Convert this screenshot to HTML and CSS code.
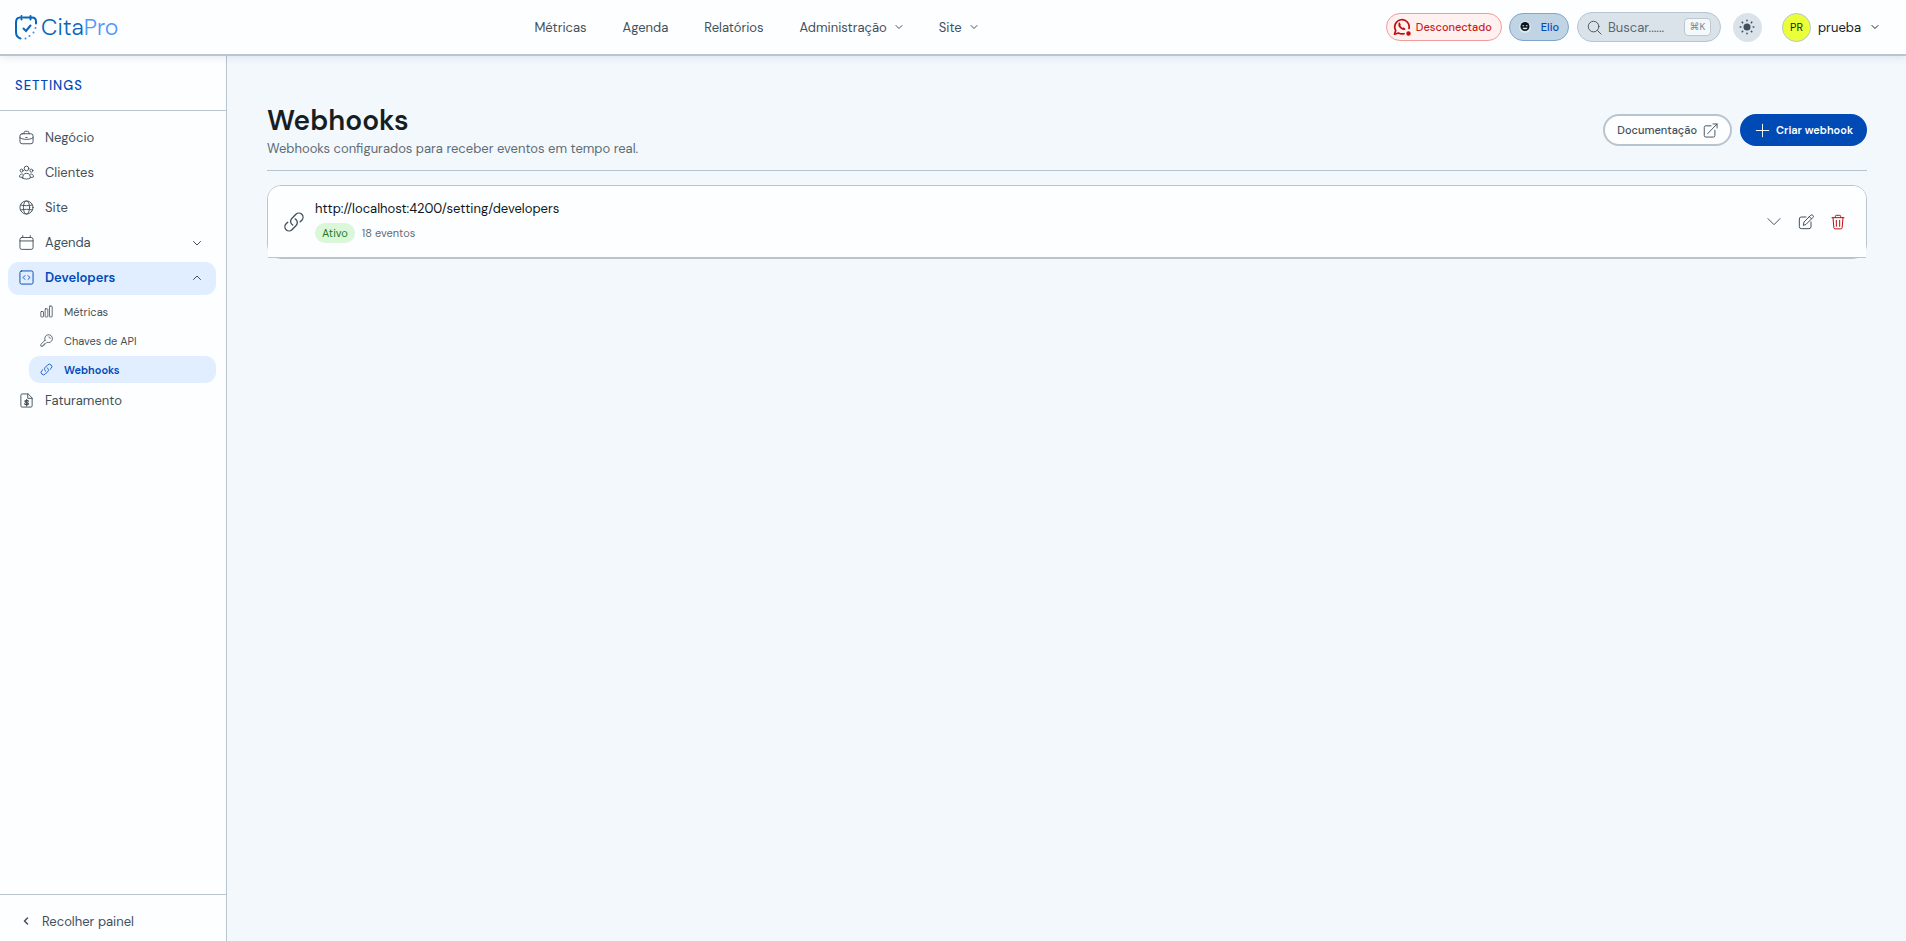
FILE: index.html
```html
<!DOCTYPE html>
<html lang="pt">
<head>
  <meta charset="UTF-8" />
  <meta name="viewport" content="width=device-width, initial-scale=1">
  <title>CitaPro - Webhooks</title>
  <link rel="stylesheet" href="styles.css">
</head>
<body>
  <header class="topbar">
    <a class="logo" href="#" aria-label="CitaPro">
      <svg viewBox="0 0 22 25" width="22" height="25" fill="none" stroke="#0a66b8" stroke-width="2" stroke-linecap="round">
        <path d="M5.500 23.500C2.500 22.500 1 20 1 17V7.500C1 4.500 2.500 2.500 5 2.500"/>
        <path d="M8.500 2.500h5.500M17 2.500c2.500 0 4 1.500 4 4v2M6.500 1v3.500M15.500 1v3.500"/>
        <path d="M8.500 13.500l2.500 2.500 4.500-5.500"/>
        <path stroke="#3f8cf0" d="M20.500 13v.1M18.500 17.500v.1M14.500 21v.1M10.500 23.500v.1"/>
      </svg>
      <span class="logo-text">Cita<span>Pro</span></span>
    </a>
    <nav class="main-nav">
      <a href="#">Métricas</a>
      <a href="#">Agenda</a>
      <a href="#">Relatórios</a>
      <button type="button">Administração <svg class="chev" viewBox="0 0 8 8"><path d="M1 2.500l3 3 3-3"/></svg></button>
      <button type="button">Site <svg class="chev" viewBox="0 0 8 8"><path d="M1 2.500l3 3 3-3"/></svg></button>
    </nav>
    <div class="actions">
      <button type="button" class="pill pill-red">
        <svg viewBox="0 0 18 18" width="18" height="18" fill="none" stroke="#c40d0d" stroke-width="1.700" stroke-linecap="round" stroke-linejoin="round">
          <path d="M11 15.700a7.300 7.300 0 0 1-5.500-.7L1.500 16.200l1.200-3.800A7.200 7.200 0 1 1 16 10.500"/>
          <path d="M6.300 5.500c-.9 2.500 2.400 6 5.200 5.700M6.300 5.500l.6 1.300M11.500 11.200L10.300 10.300"/>
          <circle cx="15.500" cy="15.500" r="1.400" fill="#c40d0d"/>
        </svg>
        Desconectado
      </button>
      <button type="button" class="pill pill-blue">
        <svg viewBox="0 0 12 12" width="12" height="12">
          <circle cx="6" cy="6" r="6" fill="#dce8f0"/>
          <circle cx="6" cy="5.500" r="4.500" fill="#0c151c"/>
          <path fill="#dce8f0" d="M3.500 4.200h1.600v1H3.500zM6.900 4.200h1.600v1H6.900zM3.500 6.700h5C8 8.800 4 8.800 3.500 6.700z"/>
        </svg>
        Elio
      </button>
      <label class="search">
        <svg class="icon" viewBox="0 0 24 24"><circle cx="10.500" cy="10.500" r="8.500"/><path d="M17 17l5.500 5.500"/></svg>
        <input type="text" placeholder="Buscar......" aria-label="Buscar">
        <kbd>⌘K</kbd>
      </label>
      <button type="button" class="theme" aria-label="Tema">
        <svg viewBox="0 0 16 16" width="16" height="16"><circle cx="8" cy="8" r="3.500" fill="#40505c"/><path stroke="#40505c" stroke-width="1.600" stroke-linecap="round" d="M8 1.200v.6M8 14.200v.6M1.200 8h.6M14.200 8h.6M3.200 3.200l.4.4M12.400 12.400l.4.4M3.200 12.800l.4-.4M12.400 3.600l.4-.4"/></svg>
      </button>
      <button type="button" class="user">
        <span class="avatar">PR</span>
        prueba
        <svg class="chev" viewBox="0 0 8 8"><path d="M1 2.500l3 3 3-3"/></svg>
      </button>
    </div>
  </header>

  <div class="layout">
    <aside class="sidebar">
      <h2>SETTINGS</h2>
      <nav class="side-nav">
        <a class="item" href="#">
          <svg class="icon" viewBox="0 0 24 24"><rect x="1.500" y="6" width="21" height="16" rx="3.500"/><path d="M8 6V4.500A2.500 2.500 0 0 1 10.500 2h3A2.500 2.500 0 0 1 16 4.500V6M1.500 12.500c6 3.500 15 3.500 21 0M11 12h2"/></svg>
          Negócio
        </a>
        <a class="item" href="#">
          <svg class="icon" viewBox="0 0 24 24"><circle cx="12" cy="5.500" r="3.700"/><circle cx="4.200" cy="9" r="2.400"/><circle cx="19.800" cy="9" r="2.400"/><path d="M6 21c-.5-5 2-7.700 6-7.700s6.500 2.700 6 7.700c-3.500 2-8.500 2-12 0zM5.500 14.500C3 14 .8 15.500.8 19c1.500.8 3 1 4.500.8M18.500 14.500c2.500-.5 4.700 1 4.700 4.500-1.500.8-3 1-4.500.8"/></svg>
          Clientes
        </a>
        <a class="item" href="#">
          <svg class="icon" viewBox="0 0 24 24"><circle cx="12" cy="12" r="10.500"/><ellipse cx="12" cy="12" rx="5" ry="10.500"/><path d="M2.500 8c6 1.500 13 1.500 19 0M2.500 16c6-1.500 13-1.500 19 0"/></svg>
          Site
        </a>
        <button type="button" class="item">
          <svg class="icon" viewBox="0 0 24 24"><rect x="1.500" y="4" width="21" height="19" rx="3"/><path d="M1.500 9.500h21M6 1v3M18 1v3"/></svg>
          Agenda
          <svg class="chev arrow" viewBox="0 0 8 8"><path d="M0.500 2.500L4 6l3.500-3.500"/></svg>
        </button>
        <button type="button" class="item active" aria-expanded="true">
          <svg class="icon" viewBox="0 0 24 24"><rect x="1.500" y="1.500" width="21" height="21" rx="2.500"/><path d="M9.500 9L6.500 12l3 3M14.500 9l3 3-3 3"/></svg>
          Developers
          <svg class="chev arrow" viewBox="0 0 8 8"><path d="M0.500 5.500L4 2l3.500 3.500"/></svg>
        </button>
        <div class="submenu">
          <a class="subitem" href="#">
            <svg class="icon" viewBox="0 0 24 24"><rect x="1.500" y="12" width="5" height="10" rx="1"/><rect x="9.500" y="7" width="5" height="15" rx="1"/><rect x="17.500" y="2" width="5" height="20" rx="1"/></svg>
            Métricas
          </a>
          <a class="subitem" href="#">
            <svg class="icon" viewBox="0 0 24 24"><path d="M9.200 11.500L1.500 19.200v3.300h4.200v-2.200h2.200v-2.200h2.200l2.900-2.900A7.200 7.200 0 1 0 9.200 11.500z"/><path d="M16.500 5.500a2.500 2.500 0 0 1 2.500 2.500"/></svg>
            Chaves de API
          </a>
          <a class="subitem active" href="#">
            <svg class="icon" viewBox="0 0 24 24"><path d="M13.200 8.700a4.500 4.500 0 0 1 1.100 7.200l-4.500 4.500a4.500 4.500 0 0 1-6.400-6.400l1.800-1.700M18.700 11.700l1.800-1.700a4.500 4.500 0 0 0-6.400-6.400L9.600 8.100a4.500 4.500 0 0 0 1.100 7.200"/></svg>
            Webhooks
          </a>
        </div>
        <a class="item" href="#">
          <svg class="icon" viewBox="0 0 24 24"><path d="M14 1.500H5a2 2 0 0 0-2 2v17a2 2 0 0 0 2 2h14a2 2 0 0 0 2-2V8.500zM14 1.500v7h7"/><path stroke-width="2" d="M15 13c-1-1.500-5.500-1.500-5.500.7 0 2.300 5.500 1 5.500 3.300 0 2-5 2-6 .3M12.200 10.500v10"/></svg>
          Faturamento
        </a>
      </nav>
      <button type="button" class="collapse">
        <svg class="chev" viewBox="0 0 8 8"><path d="M5.500 1l-3 3 3 3"/></svg>
        Recolher painel
      </button>
    </aside>

    <main class="content">
      <div class="page-head">
        <div>
          <h1>Webhooks</h1>
          <p>Webhooks configurados para receber eventos em tempo real.</p>
        </div>
        <div class="page-actions">
          <a class="btn btn-outline" href="#">
            Documentação
            <svg class="icon" viewBox="0 0 24 24"><path d="M13 4.500H4.500a2.500 2.500 0 0 0-2.500 2.500v13A2.500 2.500 0 0 0 4.500 22.500h12a2.500 2.500 0 0 0 2.500-2.500v-8.500M7.500 17L22.500 1.500M16 1.500h6.500V8"/></svg>
          </a>
          <button type="button" class="btn btn-primary">
            <svg class="icon" viewBox="0 0 24 24"><path d="M12 2v20M2 12h20"/></svg>
            Criar webhook
          </button>
        </div>
      </div>

      <div class="card">
        <div class="webhook">
          <svg class="icon link-icon" viewBox="0 0 24 24"><path d="M13.200 8.700a4.500 4.500 0 0 1 1.100 7.200l-4.500 4.500a4.500 4.500 0 0 1-6.400-6.400l1.800-1.700M18.700 11.700l1.800-1.700a4.500 4.500 0 0 0-6.400-6.400L9.600 8.100a4.500 4.500 0 0 0 1.100 7.200"/></svg>
          <div class="info">
            <span class="url">http://localhost:4200/setting/developers</span>
            <div class="meta"><span class="badge">Ativo</span> <span>18 eventos</span></div>
          </div>
          <div class="tools">
            <button type="button" aria-label="Expandir"><svg class="icon" viewBox="0 0 24 24"><path d="M3 7l9 9 9-9"/></svg></button>
            <button type="button" aria-label="Editar"><svg class="icon" viewBox="0 0 24 24"><path d="M12 4.500H5A3 3 0 0 0 2 7.500V19a3 3 0 0 0 3 3h11.500a3 3 0 0 0 3-3v-7M8 16.500l1-4.500L19 2a2.300 2.300 0 0 1 3.300 3.300l-10 10zM17 4l3.200 3.200"/></svg></button>
            <button type="button" class="danger" aria-label="Excluir"><svg class="icon" viewBox="0 0 24 24"><path d="M3 5.500h18M8 5.500V3.500A1.500 1.500 0 0 1 9.500 2h5A1.500 1.500 0 0 1 16 3.500v2M4.500 5.500l1.300 15a2 2 0 0 0 2 1.800h8.400a2 2 0 0 0 2-1.800l1.300-15M9.500 9.500v9M14.500 9.500v9"/></svg></button>
          </div>
        </div>
      </div>
    </main>
  </div>
</body>
</html>
```
FILE: styles.css
```css
* { box-sizing:border-box; }
body { margin:0; min-height:100vh; display:flex; flex-direction:column; font-family:"DM Sans", Inter, sans-serif; font-size:13px; color:#435059; background:#f3f8fd; }
a { color:inherit; text-decoration:none; }
button { font:inherit; color:inherit; background:none; border:none; padding:0; cursor:pointer; }
svg { flex:none; }
.icon { width:15px; height:15px; fill:none; stroke:currentColor; stroke-width:1.5; stroke-linecap:round; stroke-linejoin:round; }
.chev { width:8px; height:8px; fill:none; stroke:currentColor; stroke-width:1; stroke-linecap:round; stroke-linejoin:round; }

/* top bar */
.topbar { position:relative; height:56px; padding:0 27px 0 15px; display:flex; align-items:center; justify-content:space-between; background:#fdfeff; border-bottom:2px solid #bac5ce; box-shadow:0 2px 8px rgba(30,60,90,0.1); }
.logo { display:flex; align-items:center; gap:4px; }
.logo-text { font-family:"DM Sans", Lato, sans-serif; font-size:23px; line-height:26px; font-weight:300; color:#0a66b8; }
.logo-text span { color:#5297fa; }
.main-nav { margin-left:8px; display:flex; align-items:center; gap:36px; }
.main-nav button { display:flex; align-items:center; gap:8px; }
.actions { display:flex; align-items:center; }
.pill { height:28px; display:flex; align-items:center; border:1px solid; border-radius:14px; font-size:11px; font-weight:500; }
.pill-red { padding:0 9px 0 6px; gap:5px; color:#c81e1e; background:#fff1f0; border-color:#f09a9a; }
.pill-blue { margin-left:7px; padding:0 9px; gap:10px; color:#0049b8; background:#c0d4e4; border-color:#7ea6cc; }
.search { width:144px; height:30px; margin-left:8px; padding:0 9px; display:flex; align-items:center; gap:6px; background:#dbe3ea; border:1px solid #b8c4ce; border-radius:15px; }
.search input { flex:1; min-width:0; padding:0; border:none; outline:none; background:none; font:inherit; color:#435059; }
.search input::placeholder { color:#5a6871; opacity:1; }
kbd { width:27px; height:18px; text-align:center; font-family:"DM Sans", "DejaVu Sans", sans-serif; font-size:10px; line-height:15px; color:#77848c; background:#f6f9fb; border:1px solid #bcc7cf; border-radius:4px; }
.theme { width:29px; height:29px; margin-left:12px; display:flex; align-items:center; justify-content:center; border-radius:50%; background:#dbe3ea; }
.user { margin-left:20px; display:flex; align-items:center; gap:7px; color:#171e23; }
.avatar { width:29px; height:29px; border:1px solid #b8c4ce; border-radius:50%; background:#eaff38; font-size:11px; line-height:27px; text-align:center; }
.user .chev { margin-left:3px; }

.layout { flex:1; display:flex; }

/* sidebar */
.sidebar { width:227px; display:flex; flex-direction:column; background:#fdfeff; border-right:1px solid #b8c4ce; }
.sidebar h2 { margin:0; padding:22px 15px 16px; font-size:13px; line-height:16px; font-weight:500; letter-spacing:1px; color:#0049b8; border-bottom:1px solid #b8c4ce; }
.side-nav { flex:1; padding:11px 10px 8px 8px; display:flex; flex-direction:column; gap:2px; }
.item { height:33px; padding:0 15px 2px 11px; display:flex; align-items:center; gap:11px; border-radius:11px; text-align:left; }
.arrow { margin-left:auto; }
.active { background:#e0eeff; color:#0049b8; font-weight:600; }
.active .arrow { color:#435059; }
.submenu { margin-left:21px; padding-top:1px; display:flex; flex-direction:column; gap:2px; }
.subitem { height:27px; padding:0 11px; display:flex; align-items:center; gap:11px; border-radius:11px; font-size:11px; }
.subitem .icon { width:13px; height:13px; }
.collapse { height:47px; padding:6px 22px 0; display:flex; align-items:center; gap:12px; border-top:1px solid #b8c4ce; }
.collapse .chev { stroke-width:1.5; }

/* page */
.content { flex:1; padding:46px 39px 40px 40px; }
.page-head { padding-bottom:12px; display:flex; align-items:center; justify-content:space-between; border-bottom:1px solid #b8c4ce; }
.page-head h1 { margin:0; font-size:28px; line-height:38px; font-weight:600; color:#171e23; }
.page-head p { margin:0; line-height:18px; color:#5f6c75; }
.page-actions { display:flex; align-items:center; gap:8px; }
.btn { height:32px; display:flex; align-items:center; border-radius:16px; font-size:11px; }
.btn-outline { padding:0 12px; gap:6px; font-weight:500; background:#fdfeff; border:2px solid #b8c4ce; }
.btn-primary { padding:0 14px 0 15px; gap:6px; font-weight:600; color:#fff; background:#004ab5; }
.card { margin-top:14px; background:#fdfeff; border:1px solid #b8c4ce; border-radius:14px; }
.webhook { padding:14px 20px 14px 15px; display:flex; align-items:center; gap:10px; background:#fdfeff; border-bottom:1px solid #b8c4ce; border-radius:13px 13px 0 0; }
.link-icon { width:22px; height:22px; }
.info { flex:1; }
.url { display:block; line-height:18px; color:#10161a; }
.meta { margin-top:5px; display:flex; align-items:center; gap:7px; font-size:11px; line-height:20px; color:#5f6c75; }
.badge { padding:0 7px; border-radius:10px; background:#daf7da; color:#187a28; }
.tools { display:flex; align-items:center; gap:16px; }
.tools button { display:flex; }
.tools .icon { width:16px; height:16px; }
.danger { color:#c40d0d; }
```
